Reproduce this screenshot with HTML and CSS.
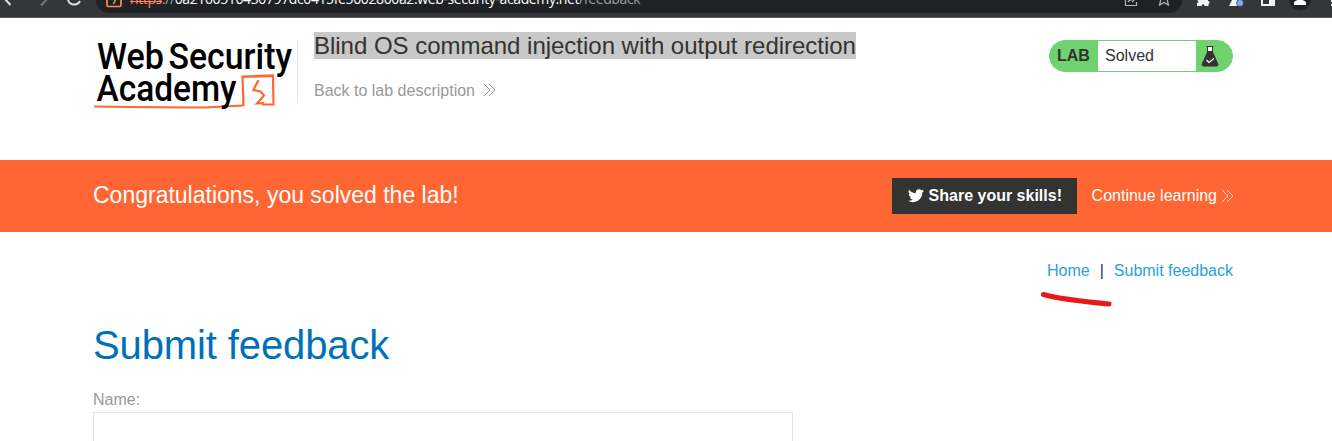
FILE: index.html
```
<!DOCTYPE html>
<html lang="en">
<head>
<meta charset="utf-8">
<title>Blind OS command injection with output redirection</title>
<link rel="stylesheet" href="styles.css">
</head>
<body>
<div class="toolbar">
  <svg class="nav-icons" width="96" height="18" fill="none">
    <path d="M4 -2L10.500 5" stroke="#dfe1e5" stroke-width="2"/>
    <path d="M48 -2L41 5.500" stroke="#75777a" stroke-width="2"/>
    <path d="M68 0A6.500 6.500 0 0 0 80 1" stroke="#dfe1e5" stroke-width="2"/>
  </svg>
  <div class="address">
    <svg class="site-icon" width="16" height="13" fill="none" stroke="#ff8a5c">
      <path d="M1 -2V5Q1 6.500 2.500 6.500H13.500Q15 6.500 15 5V-2" stroke-width="1.700"/>
      <path d="M7 -1H10L8.500 1.500L7.500 4" stroke-width="1.500"/>
    </svg>
    <div class="url"><span class="scheme">https</span><span class="dim">://</span>0a2100510430797dc0415fe5002800a2.web-security-academy.net<span class="dim">/feedback</span></div>
    <svg class="page-icons" width="60" height="13" fill="none" stroke="#b4b6b9" stroke-width="1.200">
      <path d="M3.500 -1V5.500H14.500V2M6 2Q7 0 12 -1M10 2L13 -1"/>
      <path d="M39 -1L37.500 5L42 2.500L46.500 5L45 -1"/>
    </svg>
  </div>
  <svg class="ext-icons" width="150" height="18">
    <path d="M16 -1H26V1Q29 2 26.500 4V6H22.500Q21.500 2 19.500 6H15V3Q18 2 15.500 1Z" fill="#f1f3f4"/>
    <path d="M51 -2H57L60 6H47Z" fill="#f1f3f4"/><circle cx="58" cy="3" r="3.500" fill="#7cacf8" stroke="#35363a" stroke-width=".7"/>
    <path d="M80 -2V5H92V-2" fill="none" stroke="#f1f3f4" stroke-width="2"/><path d="M87 -2H92V4H87Z" fill="#f1f3f4"/>
    <circle cx="118" cy="-1" r="11" fill="#202124"/><path d="M112 5V3Q112 1 116 0V-2H120V0Q124 1 124 3V5Z" fill="#fff"/>
    <path d="M149 0H150V2H149ZM149 4H150V6H149Z" fill="#f1f3f4"/>
  </svg>
</div>

<header class="lab-header">
  <svg class="logo" width="204" height="80" viewBox="0 0 204 80" role="img">
    <path d="M1 74.500Q80 75.500 112 75.500L150 73.500" fill="none" stroke="#ff6633" stroke-width="2"/>
    <path d="M150.500 74L149.500 44.500L180 43.500L180.500 72.500L169 72.500M149 45L181 44" fill="none" stroke="#ff6633" stroke-width="2.200"/>
    <path d="M165.500 48L160.500 58L167.500 59.500L171 63.500L164 71.500L171 71" fill="none" stroke="#ff6633" stroke-width="2.200"/>
    <g class="logo-text">
      <text x="4" y="36.500" textLength="67" lengthAdjust="spacingAndGlyphs">Web</text>
      <text x="75.500" y="36.500" textLength="123.500" lengthAdjust="spacingAndGlyphs">Security</text>
      <text x="3.500" y="69" textLength="140" lengthAdjust="spacingAndGlyphs">Academy</text>
    </g>
  </svg>
  <div class="title-block">
    <h2><span>Blind OS command injection with output redirection</span></h2>
    <a class="back">Back to lab description <svg width="13" height="14" viewBox="0 0 13 14"><path d="M1 1L7 7L1 13M6 1L12 7L6 13"/></svg></a>
  </div>
  <div class="status">
    <b>LAB</b><span>Solved</span>
    <svg width="36" height="30" viewBox="0 0 36 30">
      <path d="M10.500 5.500H17.500M11.500 6V11L6 23.500Q6 25 7.500 25H20.500Q22 25 22 23.500L16.500 11V6" fill="#333332" stroke="#333332"/>
      <path d="M12 6H16V10H12Z" fill="#fff"/>
      <path d="M10.500 19L13 21.500L18 17.500" fill="none" stroke="#fff" stroke-width="1.200"/>
    </svg>
  </div>
</header>

<section class="banner">
  <p>Congratulations, you solved the lab!</p>
  <a class="share"><svg width="16" height="14" viewBox="1 3 22 18.500"><path fill="#fff" d="M23 5.100a9 9 0 0 1-2.600.7 4.500 4.500 0 0 0 2-2.500 9 9 0 0 1-2.900 1.100A4.500 4.500 0 0 0 11.800 8.500 12.800 12.800 0 0 1 2.500 3.800a4.500 4.500 0 0 0 1.400 6 4.500 4.500 0 0 1-2-.6A4.500 4.500 0 0 0 5.500 13.700a4.500 4.500 0 0 1-2 .1 4.500 4.500 0 0 0 4.200 3.100A9 9 0 0 1 1 18.800a12.800 12.800 0 0 0 6.900 2c8.300 0 12.900-7 12.800-13.400A9 9 0 0 0 23 5.100z"/></svg>Share your skills!</a>
  <a class="continue">Continue learning <svg width="13" height="14" viewBox="0 0 13 14"><path d="M1 1L7 7L1 13M6 1L12 7L6 13"/></svg></a>
</section>

<main class="content">
  <nav><a>Home</a><i>|</i><a>Submit feedback</a>
    <svg class="underline" width="74" height="18"><path d="M4.500 4.500Q22 9.500 70 14" fill="none" stroke="#e81919" stroke-width="5" stroke-linecap="round"/></svg>
  </nav>
  <h1>Submit feedback</h1>
  <label for="name">Name:</label>
  <input id="name" type="text">
</main>
</body>
</html>
```
FILE: styles.css
```
* { box-sizing: border-box; }
body {
  margin: 0;
  height: 441px;
  overflow: hidden;
  background: #fff;
  color: #333332;
  font: 16px/20px "Liberation Sans", Arial, sans-serif;
}
svg { flex: none; display: block; }
h1, h2, p { margin: 0; font-weight: 400; }
.toolbar {
  display: flex;
  height: 18px;
  overflow: hidden;
  background: #35363a;
  border-bottom: 1px solid #5b5c60;
}
.address {
  display: flex;
  width: 1086px;
  height: 13px;
  padding-left: 10px;
  background: #202124;
  border-radius: 0 0 13px 13px;
}
.url {
  flex: 1;
  margin: -11px 0 0 8px;
  color: #fff;
  font: 14px/20px "Open Sans", "Noto Sans", sans-serif;
  letter-spacing: -0.385px;
  white-space: nowrap;
}
.scheme {
  background: linear-gradient(#ff8a5c, #ff8a5c) 0 12px / 100% 1px no-repeat;
  color: #ff8a5c;
}
.dim { color: #9aa0a6; }
.lab-header {
  display: flex;
  align-items: flex-start;
  height: 142px;
  padding: 14px 99px 0 93px;
}
.logo-text {
  font: 500 37px Roboto, sans-serif;
  fill: #000;
}
.title-block {
  flex: 1;
  margin-top: 8px;
  padding-left: 16px;
  height: 62px;
  border-left: 1px solid #e4e4e2;
}
h2 { margin-top: -8px; font-size: 24px; line-height: 27px; letter-spacing: -0.02px; }
h2 span { display: inline-block; background: #c8c8c8; }
.back {
  display: flex;
  align-items: center;
  gap: 8px;
  margin-top: 22px;
  color: #999998;
}
.back svg { margin-bottom: 2px; }
.back path { fill: none; stroke: #999998; }
.status {
  display: flex;
  width: 184px;
  height: 32px;
  margin-top: 8px;
  border: 1px solid #70d26e;
  border-radius: 16px;
  overflow: hidden;
  background: #70d26e;
  line-height: 30px;
}
.status b { width: 48px; padding-left: 7px; }
.status span { width: 98px; padding-left: 7px; background: #fff; }
.banner {
  display: flex;
  align-items: center;
  height: 72px;
  padding: 0 98px 0 93px;
  background: #ff6633;
  color: #fff;
}
.banner p { flex: 1; padding-bottom: 1px; font-size: 23px; line-height: 27px; }
.share {
  display: flex;
  align-items: center;
  gap: 5px;
  width: 185px;
  height: 36px;
  padding-left: 16px;
  margin-right: 15px;
  background: #333332;
  font-weight: 700;
}
.continue { display: flex; align-items: center; gap: 4px; }
.continue path { fill: none; stroke: #fff; stroke-opacity: .8; }
.content { padding: 29px 99px 0 93px; }
nav { position: relative; display: flex; justify-content: flex-end; gap: 10px; color: #29a0e0; }
nav i { color: #333332; font-style: normal; }
.underline { position: absolute; right: 120px; top: 29px; }
h1 { margin-top: 41px; color: #0070ba; font-size: 40px; line-height: 46px; letter-spacing: -0.12px; }
label { display: block; margin-top: 21px; color: #999998; line-height: 22px; }
input {
  display: block;
  width: 700px;
  height: 42px;
  margin-top: 1px;
  border: 1px solid #e4e4e2;
}
```
